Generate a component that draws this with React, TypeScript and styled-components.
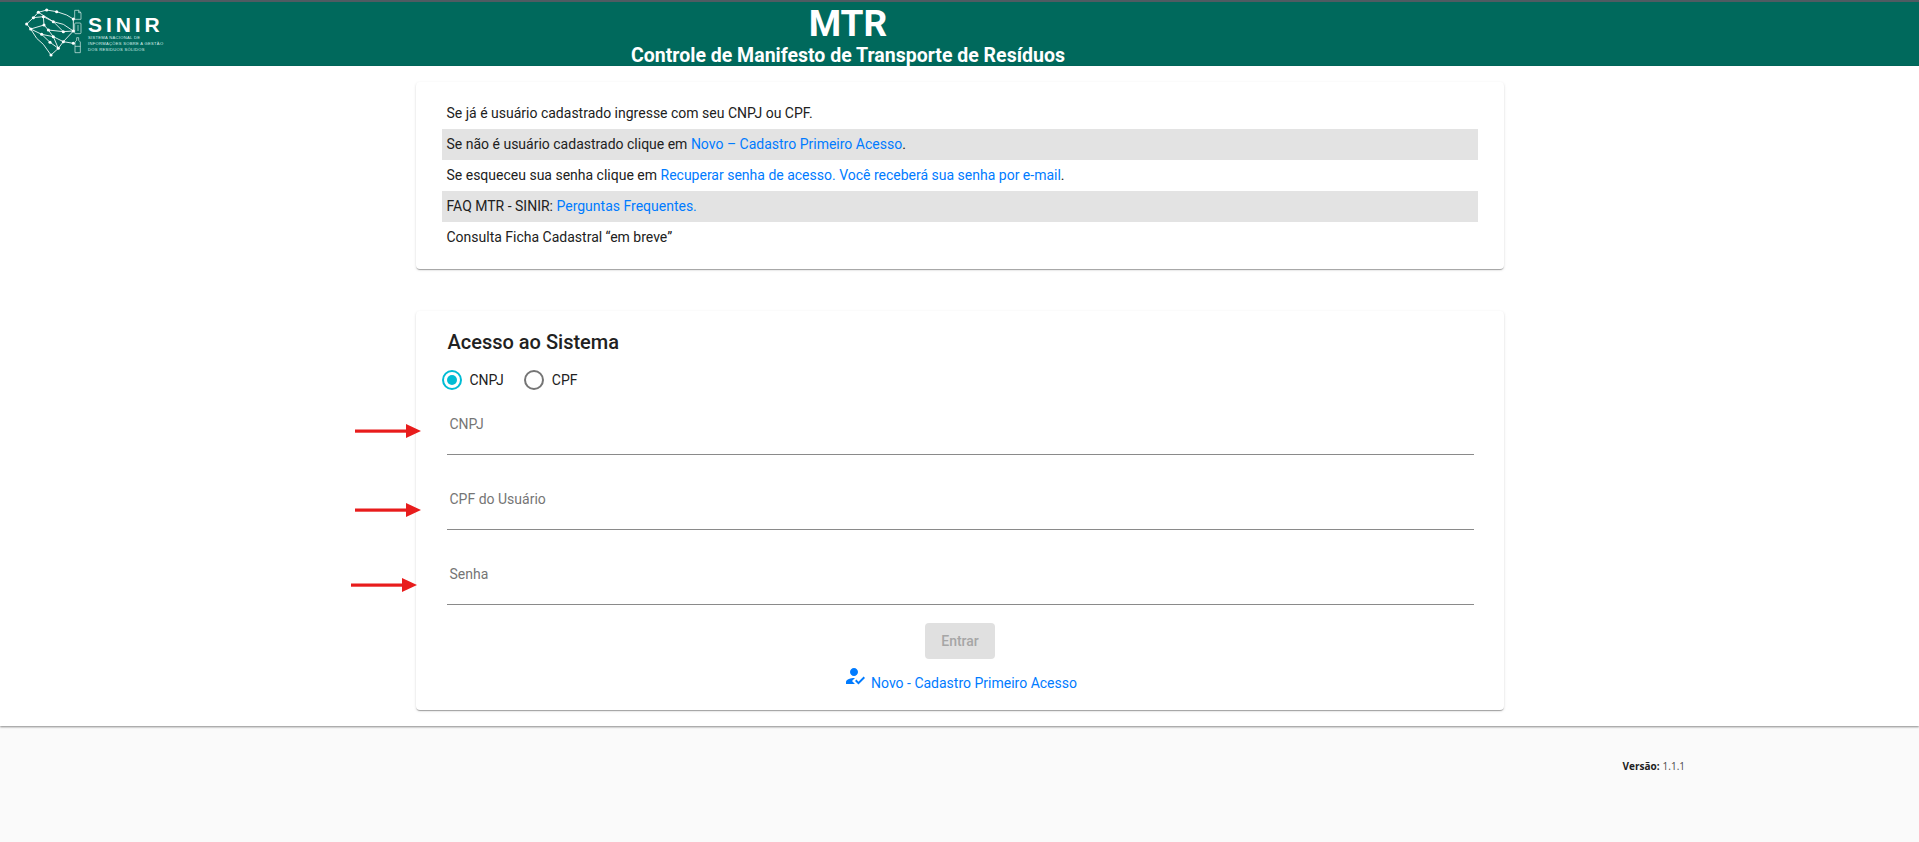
import React from "react";
import styled, { createGlobalStyle } from "styled-components";

const GlobalStyle = createGlobalStyle`
  html, body { margin: 0; padding: 0; background: #fafafa; }
  body { font-family: Roboto, "Liberation Sans", sans-serif; color: #212121; }
  * { box-sizing: border-box; }
`;

const Page = styled.div`
  position: relative;
  height: 842px;
  overflow: hidden;
`;

const TopBar = styled.header`
  display: flex;
  height: 66px;
  background: #00695c;
  border-top: 2px solid #4f5b62;
  color: #fff;
  padding-left: 20px;
`;

const LogoArea = styled.div`
  display: flex;
  flex: none;
  width: 160px;
`;

const LogoMark = styled.svg`
  flex: none;
  width: 68px;
  height: 58px;
  margin-top: 3px;
`;

const LogoText = styled.div`
  display: flex;
  flex-direction: column;
  padding-top: 15px;
`;

const LogoName = styled.div`
  font-family: "Liberation Sans", sans-serif;
  font-size: 21px;
  line-height: 15px;
  font-weight: 700;
  letter-spacing: 3.9px;
`;

const LogoCaption = styled.div`
  font-family: "Liberation Sans", sans-serif;
  font-size: 4.1px;
  line-height: 6.2px;
  letter-spacing: 0.3px;
  margin-top: 3px;
  white-space: nowrap;
  color: #d9eeea;
`;

const TitleBlock = styled.div`
  flex: 1;
  margin-right: 403px;
  text-align: center;
`;

const AppTitle = styled.h1`
  margin: 0;
  font-size: 37px;
  line-height: 43px;
  font-weight: 700;
`;

const AppSubtitle = styled.h2`
  margin: 0;
  font-size: 19.5px;
  line-height: 21px;
  font-weight: 700;
  white-space: nowrap;
`;

const Main = styled.main`
  height: 660px;
  background: #fff;
  padding-top: 16px;
  box-shadow: 0 1px 2px rgba(0, 0, 0, 0.45);
`;

const Card = styled.section`
  width: 1088px;
  margin: 0 auto;
  background: #fff;
  border-radius: 4px;
  box-shadow: 0 2px 1px -1px rgba(0, 0, 0, 0.2), 0 1px 1px 0 rgba(0, 0, 0, 0.14),
    0 1px 3px 0 rgba(0, 0, 0, 0.12);
`;

const InfoCard = styled(Card)`
  height: 187px;
  padding: 16px 26px;
  margin-bottom: 42px;
`;

const InfoRow = styled.div<{ $shaded?: boolean }>`
  height: 31px;
  padding-left: 5px;
  font-size: 14px;
  line-height: 31px;
  color: #212121;
  background: ${(p) => (p.$shaded ? "#e3e3e3" : "transparent")};
`;

const Link = styled.a`
  color: #007bff;
  text-decoration: none;
`;

const AccessCard = styled(Card)`
  height: 399px;
  padding: 16px 30px 0 31px;
`;

const CardTitle = styled.h3`
  margin: 0;
  font-size: 20px;
  line-height: 30px;
  font-weight: 500;
  color: #212121;
  padding-left: 1px;
`;

const RadioRow = styled.div`
  display: flex;
  align-items: center;
  height: 20px;
  margin: 13px 0 0 -5px;
`;

const RadioCircle = styled.span<{ $checked?: boolean }>`
  width: 20px;
  height: 20px;
  border-radius: 50%;
  border: 2px solid ${(p) => (p.$checked ? "#00bcd4" : "#757575")};
  display: flex;
  align-items: center;
  justify-content: center;
  &::after {
    content: "";
    display: ${(p) => (p.$checked ? "block" : "none")};
    width: 10px;
    height: 10px;
    border-radius: 50%;
    background: #00bcd4;
  }
`;

const RadioLabel = styled.span`
  font-size: 14px;
  margin: 0 20px 0 8px;
  color: #212121;
`;

const Field = styled.div<{ $first?: boolean }>`
  height: ${(p) => (p.$first ? 65 : 75)}px;
  border-bottom: 1px solid #8a8a8a;
  padding: 0 2px 20px 3px;
  font-size: 14px;
  line-height: 20px;
  color: #757575;
  display: flex;
  align-items: flex-end;
`;

const ActionRow = styled.div`
  display: flex;
  justify-content: center;
  margin-top: 18px;
`;

const EnterButton = styled.button`
  width: 70px;
  height: 36px;
  border: 0;
  border-radius: 4px;
  background: #e0e0e0;
  color: #a6a6a6;
  font-family: Roboto, sans-serif;
  font-size: 14px;
  font-weight: 500;
`;

const SignupRow = styled.div`
  display: flex;
  justify-content: center;
  align-items: flex-end;
  gap: 4px;
  margin-top: 5px;
  font-size: 14px;
  line-height: 20px;
`;

const SignupIcon = styled.svg`
  flex: none;
  width: 24px;
  height: 24px;
  fill: #007bff;
  margin-bottom: 5px;
`;

const VersionLine = styled.div`
  display: flex;
  justify-content: flex-end;
  gap: 3px;
  padding: 33px 234px 0 0;
  font-family: "Open Sans", sans-serif;
  font-size: 10px;
  color: #4a4a4a;
  b {
    color: #212121;
  }
`;

const ArrowMark = styled.svg<{ $left: number; $top: number }>`
  position: absolute;
  left: ${(p) => p.$left}px;
  top: ${(p) => p.$top}px;
  width: 68px;
  height: 16px;
`;

function Arrow({ left, top }: { left: number; top: number }) {
  return (
    <ArrowMark $left={left} $top={top} viewBox="0 0 68 16">
      <rect x="0" y="6.5" width="52" height="3.2" fill="#e81c1c" />
      <polygon points="51,1 66,8 51,15" fill="#e81c1c" />
    </ArrowMark>
  );
}

// node positions of the Brazil network in the logo
const nodes: [number, number][] = [
  [20, 57], [40, 38], [55, 22], [80, 15], [110, 20], [70, 35], [100, 50], [160, 42],
  [72, 60], [32, 72], [85, 75], [130, 80], [160, 78], [65, 88], [100, 95], [130, 110],
  [160, 115], [115, 130], [93, 150], [90, 112],
];

const links =
  "M20 57L40 38L55 22L80 15L110 20L140 30L160 42L160 78M40 38L70 35L100 50L130 58L160 78" +
  "M20 57L32 72L72 60L85 75L130 80L160 78M72 60L70 35M100 50L130 80M32 72L65 88L100 95L130 110L160 115" +
  "M65 88L90 112L115 130L93 150M100 95L115 130L130 110L160 78M93 150L70 118L50 100L32 72M55 22L100 50M85 75L100 95";

function SinirMark() {
  return (
    <LogoMark viewBox="0 0 204 174" aria-hidden="true">
      <path d={links} fill="none" stroke="#fff" strokeWidth="2.6" />
      <g fill="none" stroke="#dff1ee" strokeWidth="2">
        <path d="M164 16h12l7 7v20h-19zM176 16v7h7" />
        <rect x="164" y="54" width="19" height="32" rx="3" />
        <path d="M174 60v18" />
        <path d="M170 98h6v8l5 5v32h-16v-32l5-5z" />
        <path d="M165 124h16" />
      </g>
      <g fill="#fff">
        {nodes.map(([x, y]) => (
          <circle key={`${x}-${y}`} cx={x} cy={y} r="4.6" />
        ))}
      </g>
    </LogoMark>
  );
}

export default function App() {
  return (
    <Page>
      <GlobalStyle />
      <TopBar>
        <LogoArea>
          <SinirMark />
          <LogoText>
            <LogoName>SINIR</LogoName>
            <LogoCaption>
              SISTEMA NACIONAL DE
              <br />
              INFORMAÇÕES SOBRE A GESTÃO
              <br />
              DOS RESÍDUOS SÓLIDOS
            </LogoCaption>
          </LogoText>
        </LogoArea>
        <TitleBlock>
          <AppTitle>MTR</AppTitle>
          <AppSubtitle>Controle de Manifesto de Transporte de Resíduos</AppSubtitle>
        </TitleBlock>
      </TopBar>
      <Main>
        <InfoCard>
          <InfoRow>Se já é usuário cadastrado ingresse com seu CNPJ ou CPF.</InfoRow>
          <InfoRow $shaded>
            Se não é usuário cadastrado clique em <Link href="#">Novo – Cadastro Primeiro Acesso</Link>.
          </InfoRow>
          <InfoRow>
            Se esqueceu sua senha clique em{" "}
            <Link href="#">Recuperar senha de acesso. Você receberá sua senha por e-mail</Link>.
          </InfoRow>
          <InfoRow $shaded>
            FAQ MTR - SINIR: <Link href="#">Perguntas Frequentes.</Link>
          </InfoRow>
          <InfoRow>Consulta Ficha Cadastral “em breve”</InfoRow>
        </InfoCard>
        <AccessCard>
          <CardTitle>Acesso ao Sistema</CardTitle>
          <RadioRow>
            <RadioCircle $checked />
            <RadioLabel>CNPJ</RadioLabel>
            <RadioCircle />
            <RadioLabel>CPF</RadioLabel>
          </RadioRow>
          <Field $first>CNPJ</Field>
          <Field>CPF do Usuário</Field>
          <Field>Senha</Field>
          <ActionRow>
            <EnterButton disabled>Entrar</EnterButton>
          </ActionRow>
          <SignupRow>
            <SignupIcon viewBox="0 0 24 24" aria-hidden="true">
              <path d="M9 17l3-2.94c-.39-.04-.68-.06-1-.06-2.67 0-8 1.34-8 4v2h9l-3-3zm2-5c2.21 0 4-1.79 4-4s-1.79-4-4-4-4 1.79-4 4 1.79 4 4 4z" />
              <path d="M15.47 20.5L12 17l1.4-1.41 2.07 2.08 5.13-5.17 1.4 1.41z" />
            </SignupIcon>
            <Link href="#">Novo - Cadastro Primeiro Acesso</Link>
          </SignupRow>
        </AccessCard>
      </Main>
      <VersionLine>
        <b>Versão:</b> 1.1.1
      </VersionLine>
      <Arrow left={355} top={423} />
      <Arrow left={355} top={502} />
      <Arrow left={351} top={577} />
    </Page>
  );
}
